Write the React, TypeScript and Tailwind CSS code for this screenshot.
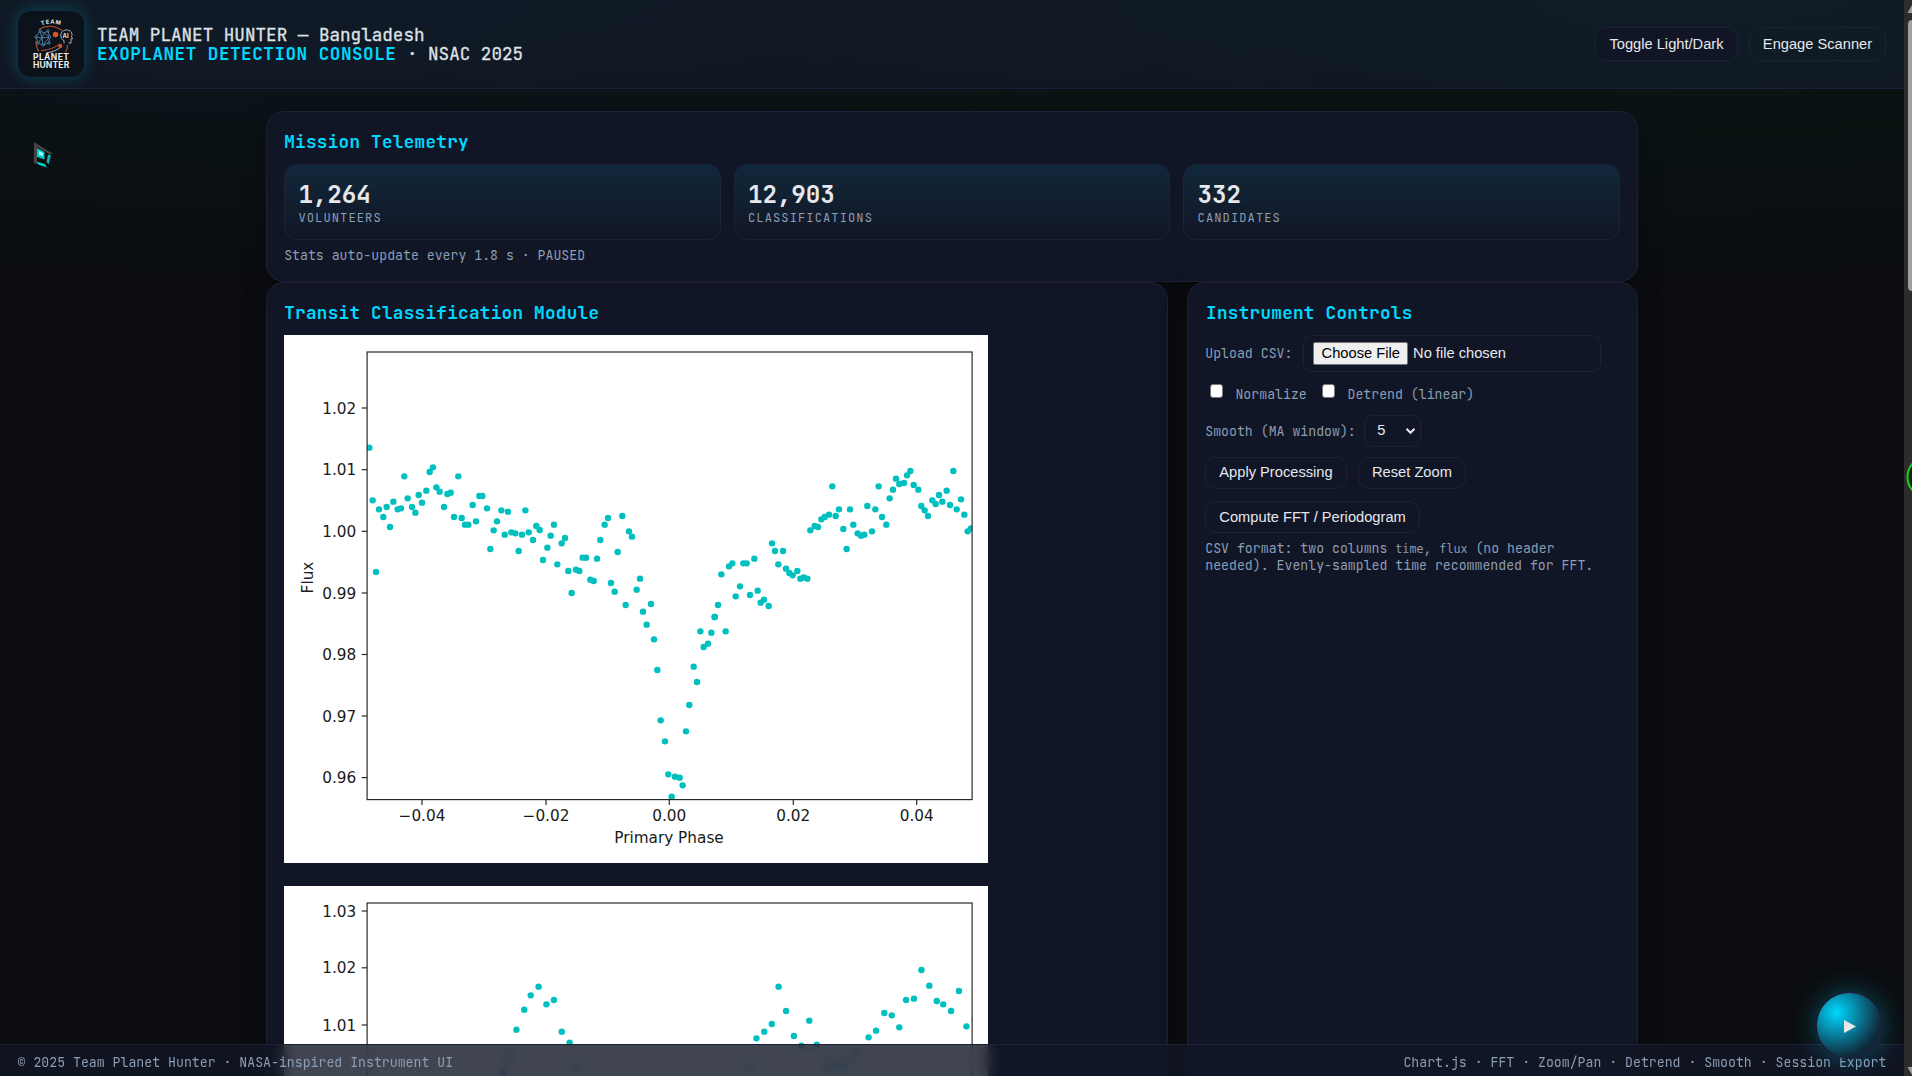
import React from "react";

type Pt = [number, number];
type Series = { ox: number; oy: number; sx: number; sy: number; pts: Pt[] };

const third = 1 / 3;

const foldedSeries: Series[] = [
  {
    ox: -4, oy: -5, sx: third, sy: third,
    pts: [
      [268, 353], [278, 511], [288, 726], [297, 538], [310, 561], [320, 531], [330, 591], [340, 515], [353, 538], [363, 535],
      [373, 439], [383, 505], [396, 531], [406, 548], [416, 495], [426, 518], [439, 482], [449, 426], [459, 412], [469, 472],
      [479, 485], [492, 531], [502, 492], [512, 488], [535, 439], [522, 561], [545, 564], [555, 584], [565, 584], [578, 525],
      [588, 574], [598, 498], [607, 498], [621, 535], [631, 657], [641, 601], [651, 574], [664, 541], [674, 614], [684, 545],
      [694, 607], [706, 610], [716, 663], [726, 614], [736, 541], [746, 607], [759, 630], [769, 588], [779, 600], [789, 690],
      [802, 653], [812, 617], [822, 584], [832, 703], [845, 640], [855, 624], [865, 723], [875, 789], [888, 719], [898, 723],
      [908, 683], [918, 683], [931, 749], [941, 753], [951, 686], [961, 630], [974, 584], [984, 564], [993, 759], [1004, 785],
      [1013, 666], [1027, 558], [1037, 825], [1047, 604], [1056, 620],
    ],
  },
  {
    ox: 346, oy: -5, sx: third, sy: third,
    pts: [
      [20, 779], [30, 746], [39, 845], [63, 822], [254, 861], [264, 825], [274, 733], [297, 709], [307, 700], [317, 799],
      [330, 769], [340, 700], [350, 700], [360, 795], [373, 686], [383, 782], [392, 818], [402, 809], [416, 828], [426, 640],
      [435, 663], [445, 703], [459, 663], [468, 716], [478, 729], [488, 736], [502, 723], [511, 746], [521, 742], [532, 746],
      [541, 601], [554, 588], [564, 591], [574, 568], [584, 561], [597, 554], [607, 469], [617, 558], [627, 538], [640, 597],
      [650, 657], [660, 538], [670, 584], [683, 610], [693, 617], [703, 614], [712, 528], [726, 604], [736, 538], [746, 469],
      [756, 561], [769, 584], [779, 505], [789, 479], [798, 446], [808, 462], [822, 459], [831, 436], [841, 423], [851, 465],
      [865, 479], [874, 528], [884, 541], [894, 558], [907, 511], [917, 522], [927, 495], [937, 515], [950, 482], [960, 525],
      [970, 423], [980, 538], [993, 508], [1003, 554], [1013, 604], [1023, 595],
    ],
  },
  {
    ox: 346, oy: 265, sx: third, sy: third,
    pts: [
      [50, 74], [72, 118], [82, 210], [92, 361], [105, 424], [115, 523], [125, 590], [135, 530], [149, 533], [158, 556],
      [168, 394], [178, 315], [191, 200], [201, 246], [211, 94], [221, 141], [234, 131], [244, 98], [254, 51], [287, 94],
    ],
  },
];

const secondSeries: Series[] = [
  {
    ox: 216, oy: -16, sx: 1 / 2.8, sy: third,
    pts: [
      [46, 479], [68, 419], [86, 376], [108, 350], [130, 403], [151, 390], [173, 485], [195, 518], [25, 555], [8, 607],
      [212, 592], [718, 505], [740, 485], [761, 462], [780, 350], [801, 423], [823, 498], [844, 527], [866, 452], [887, 524],
      [698, 588], [915, 590], [940, 584], [965, 588], [1000, 550], [1032, 502], [1053, 482], [1076, 429], [1097, 436],
      [1118, 472], [1137, 390], [1159, 386], [1180, 300], [1202, 347], [1223, 393], [1241, 403], [1263, 423], [1285, 363],
      [1306, 469], [1329, 449],
    ],
  },
];

const firstX: [number, string][] = [
  [138, "−0.04"], [262, "−0.02"], [385.3, "0.00"], [509.3, "0.02"], [632.7, "0.04"],
];
const firstY: [number, string][] = [
  [73, "1.02"], [134.7, "1.01"], [196.3, "1.00"], [258, "0.99"], [319.5, "0.98"], [381, "0.97"], [442.6, "0.96"],
];
const secondY: [number, string][] = [[25, "1.03"], [81.8, "1.02"], [139, "1.01"]];

function Plot({ id, top, series, xTicks, yTicks, xLabel, yLabel }: {
  id: string; top: number; series: Series[]; xTicks: [number, string][]; yTicks: [number, string][];
  xLabel?: string; yLabel?: string;
}) {
  const left = 83.1, right = 688.1, bottom = 464.6;
  return (
    <svg width="704" height="528" viewBox="0 0 704 528" className="block shrink-0 bg-white font-['DejaVu_Sans',sans-serif] text-[15.28px]">
      <clipPath id={id}>
        <rect x={left} y={top} width={right - left} height={bottom - top} />
      </clipPath>
      <g clipPath={`url(#${id})`} fill="#00bfbf">
        {series.map((s, i) =>
          s.pts.map(([x, y], j) => <circle key={`${i}-${j}`} cx={s.ox + x * s.sx} cy={s.oy + y * s.sy} r={3.2} />)
        )}
      </g>
      <rect x={left} y={top} width={right - left} height={bottom - top} fill="none" stroke="#222" strokeWidth="1.15" />
      {yTicks.map(([y, t]) => (
        <g key={t}>
          <path d={`M${left - 5.4} ${y}H${left}`} stroke="#222" strokeWidth="1.15" />
          <text x="72.2" y={y + 5.5} textAnchor="end" fill="#1a1a1a">{t}</text>
        </g>
      ))}
      {xTicks.map(([x, t]) => (
        <g key={t}>
          <path d={`M${x} ${bottom}V${bottom + 5.4}`} stroke="#222" strokeWidth="1.15" />
          <text x={x} y="486" textAnchor="middle" fill="#1a1a1a">{t}</text>
        </g>
      ))}
      {xLabel && <text x="385" y="508" textAnchor="middle" fill="#1a1a1a">{xLabel}</text>}
      {yLabel && <text transform="translate(28.6 242.5) rotate(-90)" textAnchor="middle" fill="#1a1a1a">{yLabel}</text>}
    </svg>
  );
}

function Logo() {
  return (
    <div className="h-[66px] w-[66px] shrink-0 rounded-[13px] bg-[#0b1219] shadow-[0_0_16px_rgba(0,216,255,0.26)]">
      <svg width="66" height="66" viewBox="0 0 66 66" className="font-['Inter',sans-serif] font-bold" fill="none">
        <path id="arc" d="M23.600 14.300Q33.500 11 43.500 14.300" />
        <text fontSize="5.6" fill="#e8e8e8" letterSpacing="0.8"><textPath href="#arc">TEAM</textPath></text>
        <path d="M21 18.500Q32 11.500 44 19.500M18 30C18 34.500 19 38 21 40.500M49.500 34C49.500 37 49 39 47.500 41" stroke="#c4502a" strokeWidth="1.1" />
        <path d="M23 39.500C32 39 38 36 42 32.500" stroke="#c4502a" strokeWidth="1" />
        <path d="M28 42C35 41 40 39 44 35" stroke="#ddd" strokeWidth="0.8" />
        <circle cx="37.500" cy="23.500" r="2.800" fill="#d4552a" />
        <circle cx="42.300" cy="35" r="2.100" fill="#d4552a" />
        <g stroke="#5b93bd" strokeWidth="0.8">
          <path d="M18 26L22 20L26 22L30 20L31.500 26L31 32L25 34L20 32ZM18 26L24 27L31.500 26M22 20L24 27L20 32M26 22L24 27L25 34M26 22L31.500 26L25 34" />
          <g fill="#0b1219">
            <circle cx="18" cy="26" r="1.200" /><circle cx="22" cy="20" r="1.200" /><circle cx="30" cy="20" r="1.200" />
            <circle cx="31.500" cy="26" r="1.200" /><circle cx="31" cy="32" r="1.200" /><circle cx="25" cy="34" r="1.200" /><circle cx="20" cy="32" r="1.200" />
          </g>
        </g>
        <path d="M46 32.500V29.500C41.500 28 41.500 20 47.500 19C53 18.500 55 22.500 53.500 25.500L54.500 28H53V32H50.500" stroke="#bbb" strokeWidth="0.9" />
        <text x="44.600" y="27" fontSize="6" fill="#ddd">AI</text>
        <text x="33.200" y="49.400" fontSize="8.500" textAnchor="middle" fill="#ececec" letterSpacing="0.400">PLANET</text>
        <text x="33.200" y="57.200" fontSize="8.500" textAnchor="middle" fill="#ececec" letterSpacing="0.150">HUNTER</text>
      </svg>
    </div>
  );
}

const btn =
  "flex items-center justify-center rounded-[11px] border border-[#211f36] font-['Liberation_Sans',Arial,sans-serif] text-[14.67px] leading-none text-[#e6e8ec]";

function Card({ title, children }: { title: string; children: React.ReactNode }) {
  return (
    <section className="min-w-0 rounded-[17.6px] border border-[#211f36] bg-[#111626] p-[17.6px] shadow-[0_9px_26px_rgba(0,0,0,0.3)]">
      <h2 className="mb-[11px] text-[17.6px] font-bold leading-[23.2px] tracking-[0.31px] text-[#00d8ff]">{title}</h2>
      {children}
    </section>
  );
}

function Stat({ value, label }: { value: string; label: string }) {
  return (
    <div className="h-[76px] rounded-[13.2px] border border-[#1f2138] bg-linear-to-b from-[#10283a] to-[#111626] p-[13.2px]">
      <div className="text-[24.2px] font-bold leading-[32px] tracking-[-0.05px] text-[#e6e8ec]">{value}</div>
      <div className="text-[12.1px] leading-[16px] tracking-[1.08px]">{label}</div>
    </div>
  );
}

function Check({ label }: { label: string }) {
  return (
    <label className="flex items-center">
      <span className="mb-[8px] mr-[12.2px] block h-[13.6px] w-[13.6px] rounded-[3px] border border-[#767676] bg-white" />
      {label}
    </label>
  );
}

export default function App() {
  return (
    <div className="relative flex h-[1076px] w-[1912px] overflow-hidden bg-[#0b0d10] font-['JetBrains_Mono','DejaVu_Sans_Mono',monospace] text-[13.2px] leading-[17.4px] tracking-[0.006px] text-[#8c9db4]">
      <div className="flex h-full w-[1904px] flex-col bg-[radial-gradient(1300px_280px_at_85%_0%,rgba(0,90,50,0.13),transparent),radial-gradient(1100px_280px_at_15%_0%,rgba(0,90,110,0.12),transparent)]">
        <header className="flex h-[89px] shrink-0 items-center justify-between border-b border-[#211f38] bg-[#111626]/80 bg-[radial-gradient(1000px_180px_at_90%_0%,rgba(0,110,80,0.08),transparent),radial-gradient(1000px_160px_at_15%_0%,rgba(0,110,110,0.05),transparent)] px-[18px]">
          <div className="flex items-center">
            <Logo />
            <div className="ml-[13px] text-[17.6px] leading-[19px] tracking-[0.01px] text-[#dfe2e6]">
              <div className="[-webkit-text-stroke:0.3px_#dfe2e6]">TEAM PLANET HUNTER — Bangladesh</div>
              <div className="[-webkit-text-stroke:0.3px_#dfe2e6]"><span className="font-bold tracking-[0.53px] text-[#00d8ff] [-webkit-text-stroke:0px]">EXOPLANET DETECTION CONSOLE</span> · NSAC 2025</div>
            </div>
          </div>
          <div className="flex gap-[11px]">
            <button className={`${btn} h-[34px] w-[143px] bg-[#111626]`}>Toggle Light/Dark</button>
            <button className={`${btn} h-[34px] w-[137px]`}>Engage Scanner</button>
          </div>
        </header>

        <main className="mx-auto flex min-h-0 w-[1372.8px] flex-1 flex-col pt-[22px]">
          <Card title="Mission Telemetry">
            <div className="grid grid-cols-3 gap-[13.2px]">
              <Stat value="1,264" label="VOLUNTEERS" />
              <Stat value="12,903" label="CLASSIFICATIONS" />
              <Stat value="332" label="CANDIDATES" />
            </div>
            <p className="mt-[7.4px] -mb-px">Stats auto-update every 1.8 s · PAUSED</p>
          </Card>

          <div className="grid h-[1100px] shrink-0 grid-cols-[902.900px_450.900px] gap-[19px]">
            <Card title="Transit Classification Module">
              <div className="flex flex-col gap-[23px]">
                <Plot id="plot-a" top={17} series={foldedSeries} xTicks={firstX} yTicks={firstY} xLabel="Primary Phase" yLabel="Flux" />
                <Plot id="plot-b" top={17} series={secondSeries} xTicks={[]} yTicks={secondY} />
              </div>
            </Card>
            <Card title="Instrument Controls">
              <div className="-ml-[0.8px]">
                <div className="flex h-[36.6px] items-center">
                  <span className="w-[97.900px]">Upload CSV:</span>
                  <div className="flex h-full w-[297.500px] items-center rounded-[9px] border border-[#211f36] pl-[8.8px] font-['Liberation_Sans',Arial,sans-serif] text-[14.67px] tracking-normal text-[#e6e8ec]">
                    <span className="mr-[4.600px] flex h-[23px] w-[95.500px] items-center justify-center rounded-[2px] border border-[#767676] bg-[#efefef] text-black">Choose File</span>
                    No file chosen
                  </div>
                </div>
                <div className="flex h-[43px] items-center gap-[15px] pl-[4.400px] pt-[4px]">
                  <Check label="Normalize" />
                  <Check label="Detrend (linear)" />
                </div>
                <div className="flex h-[32.400px] items-center">
                  <span className="w-[158.900px] pt-[2px]">Smooth (MA window):</span>
                  <div className="flex h-full w-[56.500px] items-center justify-between rounded-[9px] border border-[#211f36] pl-[12px] pr-[4px] font-['Liberation_Sans',Arial,sans-serif] text-[14.67px] text-[#e6e8ec]">
                    5
                    <svg width="11" height="8" viewBox="0 0 11 8" fill="none" stroke="#e6e8ec" strokeWidth="2"><path d="M1.500 1.800L5.500 5.800L9.500 1.800" /></svg>
                  </div>
                </div>
                <div className="mt-[9.6px] flex flex-wrap gap-x-[11.500px] gap-y-[12px]">
                  <button className={`${btn} h-[32.4px] w-[141.4px]`}>Apply Processing</button>
                  <button className={`${btn} h-[32.4px] w-[107.6px]`}>Reset Zoom</button>
                  <button className={`${btn} h-[32.4px] w-[214.6px]`}>Compute FFT / Periodogram</button>
                </div>
                <p className="mt-[6.200px] leading-[17px]">
                  CSV format: two columns <code className="font-['DejaVu_Sans_Mono',monospace] text-[11.7px] leading-none">time</code>, <code className="font-['DejaVu_Sans_Mono',monospace] text-[11.7px] leading-none">flux</code> (no header
                  <br />
                  needed). Evenly-sampled time recommended for FFT.
                </p>
              </div>
            </Card>
          </div>
        </main>
      </div>

      <aside className="h-full w-2 overflow-hidden bg-[#2c2c2c]">
        <svg width="8" height="20" className="block" fill="#9f9f9f"><path d="M3.500 13L8 5V13Z" /></svg>
        <div className="ml-1 h-[271px] w-2 rounded-full bg-[#9f9f9f]" />
        <svg width="8" height="20" className="mt-[776px] block" fill="#9f9f9f"><path d="M3.500 0H8V8Z" /></svg>
      </aside>

      <footer className="absolute bottom-0 left-0 flex h-8 w-[1904px] items-center justify-between border-t border-[#211f38] bg-[#111626]/80 px-[17.6px] pt-[4.600px] backdrop-blur-[7px]">
        <span>© 2025 Team Planet Hunter · NASA-inspired Instrument UI</span>
        <span>Chart.js · FFT · Zoom/Pan · Detrend · Smooth · Session Export</span>
      </footer>

      <button className="absolute left-[1816px] top-[992px] flex h-[67px] w-[67px] items-center justify-center rounded-full border border-[#2a1f42] bg-[radial-gradient(circle_at_30%_30%,#00d8ff,#10283a_70%)] shadow-[0_0_26px_rgba(0,216,255,0.33)]">
        <svg width="12" height="13" viewBox="0 0 12 13" fill="#e6e8ec" className="mt-[2px] ml-px"><path d="M0 0L12 6.500L0 13Z" /></svg>
      </button>

      <svg className="absolute left-[33px] top-[140px]" width="22" height="30" viewBox="0 0 22 30">
        <path d="M1 2L19.500 13.500L14.500 28L1 23.500Z" fill="#0a0a0a" />
        <path d="M1 2L19.500 13.500L17 14.500L4 7V23.500H1Z" fill="#454545" />
        <path d="M4 8L11.500 12V19.500L4 17Z" fill="#0cc" />
        <path d="M6 11L10 13V16L6 15Z" fill="#9ff" />
        <path d="M15 14.500L18 15.500L15.500 24.500L13.500 22Z" fill="#0bb5b0" />
        <path d="M3.500 21.500L12 24L14 27.500L5 24.500Z" fill="#0cc" />
      </svg>

      <svg className="absolute right-0 top-[455px]" width="6" height="44" viewBox="0 0 6 44" fill="none">
        <circle cx="22" cy="22" r="20.500" fill="#14240f" stroke="#19d419" strokeWidth="2" />
      </svg>
    </div>
  );
}
